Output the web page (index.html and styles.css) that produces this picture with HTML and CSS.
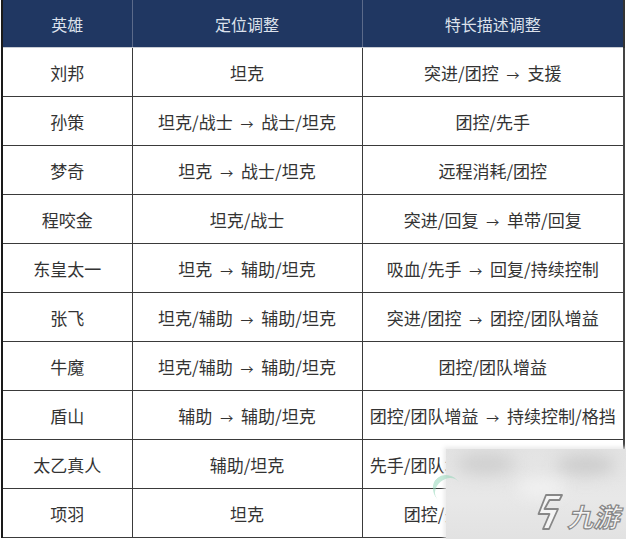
FILE: index.html
```html
<!DOCTYPE html>
<html lang="zh">
<head>
<meta charset="utf-8">
<link rel="stylesheet" href="styles.css">
</head>
<body>
<div class="page">
  <table class="hero-table">
    <colgroup>
      <col class="c1"><col class="c2"><col class="c3">
    </colgroup>
    <thead>
      <tr><th>英雄</th><th>定位调整</th><th>特长描述调整</th></tr>
    </thead>
    <tbody>
      <tr><td>刘邦</td><td>坦克</td><td>突进/团控 <span class="arr">→</span> 支援</td></tr>
      <tr><td>孙策</td><td>坦克/战士 <span class="arr">→</span> 战士/坦克</td><td>团控/先手</td></tr>
      <tr><td>梦奇</td><td>坦克 <span class="arr">→</span> 战士/坦克</td><td>远程消耗/团控</td></tr>
      <tr><td>程咬金</td><td>坦克/战士</td><td>突进/回复 <span class="arr">→</span> 单带/回复</td></tr>
      <tr><td>东皇太一</td><td>坦克 <span class="arr">→</span> 辅助/坦克</td><td>吸血/先手 <span class="arr">→</span> 回复/持续控制</td></tr>
      <tr><td>张飞</td><td>坦克/辅助 <span class="arr">→</span> 辅助/坦克</td><td>突进/团控 <span class="arr">→</span> 团控/团队增益</td></tr>
      <tr><td>牛魔</td><td>坦克/辅助 <span class="arr">→</span> 辅助/坦克</td><td>团控/团队增益</td></tr>
      <tr><td>盾山</td><td>辅助 <span class="arr">→</span> 辅助/坦克</td><td>团控/团队增益 <span class="arr">→</span> 持续控制/格挡</td></tr>
      <tr><td>太乙真人</td><td>辅助/坦克</td><td>先手/团队增益 <span class="arr">→</span> 团队增益/回复</td></tr>
      <tr><td>项羽</td><td>坦克</td><td>团控/先手 <span class="arr">→</span> 团控/突进</td></tr>
    </tbody>
  </table>
  <div class="watermark">
    <span class="blob blob-a"></span>
    <span class="blob blob-b"></span>
    <span class="blob blob-c"></span>
    <div class="logo">
      <svg class="logo-mark" viewBox="0 0 26 36" width="26" height="36" aria-hidden="true">
        <path d="M9 1 H25 L22.5 6 H12.5 L7.5 15 H21 L12 35 H6 L12.5 20 H1.5 Z" fill="#f4f4f4" stroke="#878787" stroke-width="1.8" stroke-linejoin="round"/>
      </svg>
      <span class="logo-text">九游</span>
    </div>
  </div>
  <span class="swirl"></span>
</div>
</body>
</html>
```

FILE: styles.css
```css
html, body {
  margin: 0;
  padding: 0;
  background: #ffffff;
}

.page {
  position: relative;
  width: 626px;
  height: 539px;
  overflow: hidden;
  font-family: "Noto Sans CJK SC", "Noto Sans", sans-serif;
}

.hero-table {
  border-collapse: collapse;
  table-layout: fixed;
  width: 623px;
  margin-left: 1px;
}

.c1 { width: 130px; }
.c2 { width: 230px; }
.c3 { width: 262px; }

.hero-table th {
  background: #203762;
  color: #dde2ec;
  font-weight: 400;
  font-size: 16px;
  height: 47px;
  padding: 0;
  text-align: center;
  border-left: 1px solid #5b6a8a;
  border-right: 1px solid #5b6a8a;
  border-bottom: 1px solid #c8ccd4;
}

.hero-table th:first-child { border-left: 2px solid #1a1a1a; }
.hero-table th:last-child { border-right: 2px solid #333; }

.hero-table td {
  height: 48px;
  padding: 0;
  text-align: center;
  font-size: 17px;
  color: #333333;
  white-space: nowrap;
  border: 1px solid #3a3a3a;
  border-top: none;
}

.hero-table td:first-child { border-left: 2px solid #1a1a1a; }
.hero-table td:last-child { border-right: 2px solid #444; }

.arr {
  font-size: 13px;
  margin: 0 4px;
}

.watermark {
  position: absolute;
  left: 446px;
  top: 449px;
  width: 180px;
  height: 90px;
  overflow: hidden;
  background: linear-gradient(180deg, #e3e3e3 0%, #e8e8e8 55%, #e2e2e2 100%);
  box-shadow: 0 0 4px 2px rgba(232, 232, 232, 0.9);
}

.blob {
  position: absolute;
  border-radius: 50%;
  filter: blur(8px);
}

.blob-a { left: 10px; top: 4px; width: 60px; height: 22px; background: #cfcfcf; }
.blob-b { left: 110px; top: 6px; width: 60px; height: 20px; background: #cbcbcb; }
.blob-c { left: 70px; top: 30px; width: 50px; height: 18px; background: #f2f2f2; }

.swirl {
  position: absolute;
  left: 434px;
  top: 474px;
  width: 28px;
  height: 28px;
  border-radius: 50%;
  border-top: 5px solid rgba(150, 215, 185, 0.55);
  transform: rotate(-40deg);
}

.logo {
  position: absolute;
  left: 91px;
  top: 45px;
  display: flex;
  align-items: center;
  gap: 7px;
}

.logo-mark { display: block; }

.logo-text {
  display: inline-block;
  font-size: 26px;
  line-height: 28px;
  font-weight: 700;
  color: #f4f4f4;
  -webkit-text-stroke: 1.2px #878787;
  transform: skewX(-14deg);
  margin-top: 8px;
}
```
